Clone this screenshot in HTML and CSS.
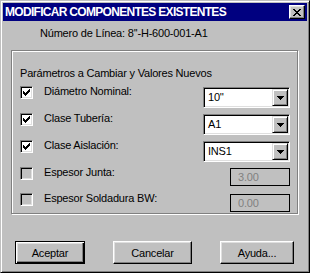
FILE: index.html
```html
<!DOCTYPE html>
<html lang="es">
<head>
  <meta charset="UTF-8">
  <title>Modificar Componentes Existentes</title>
  <link rel="stylesheet" href="styles.css">
</head>
<body>

<div class="window">
  <div class="titlebar">
    <span class="title">MODIFICAR COMPONENTES EXISTENTES</span>
    <span class="close">
      <svg width="8" height="7" viewBox="0 0 8 7" shape-rendering="crispEdges">
        <path d="M0 0h2v1H0zM6 0h2v1H6zM1 1h2v1H1zM5 1h2v1H5zM2 2h4v1H2zM3 3h2v1H3zM2 4h4v1H2zM1 5h2v1H1zM5 5h2v1H5zM0 6h2v1H0zM6 6h2v1H6z" fill="#000"/>
      </svg>
    </span>
  </div>

  <div class="client">
    <p class="line-no">Número de Línea: 8''-H-600-001-A1</p>

    <div class="group">
      <p class="group-caption">Parámetros a Cambiar y Valores Nuevos</p>

      <div class="row">
        <span class="check">
          <svg class="tick" width="7" height="7" viewBox="0 0 7 7" shape-rendering="crispEdges">
            <path d="M0 2h1v3H0zM1 3h1v3H1zM2 4h1v3H2zM3 3h1v3H3zM4 2h1v3H4zM5 1h1v3H5zM6 0h1v3H6z" fill="#000"/>
          </svg>
        </span>
        <span class="label">Diámetro Nominal:</span>
        <div class="combo">
          <span class="combo-value">10''</span>
          <span class="combo-btn">
            <svg width="7" height="4" viewBox="0 0 7 4" shape-rendering="crispEdges"><path d="M0 0h7v1H0zM1 1h5v1H1zM2 2h3v1H2zM3 3h1v1H3z" fill="#000"/></svg>
          </span>
        </div>
      </div>

      <div class="row">
        <span class="check">
          <svg class="tick" width="7" height="7" viewBox="0 0 7 7" shape-rendering="crispEdges">
            <path d="M0 2h1v3H0zM1 3h1v3H1zM2 4h1v3H2zM3 3h1v3H3zM4 2h1v3H4zM5 1h1v3H5zM6 0h1v3H6z" fill="#000"/>
          </svg>
        </span>
        <span class="label">Clase Tubería:</span>
        <div class="combo">
          <span class="combo-value">A1</span>
          <span class="combo-btn">
            <svg width="7" height="4" viewBox="0 0 7 4" shape-rendering="crispEdges"><path d="M0 0h7v1H0zM1 1h5v1H1zM2 2h3v1H2zM3 3h1v1H3z" fill="#000"/></svg>
          </span>
        </div>
      </div>

      <div class="row">
        <span class="check">
          <svg class="tick" width="7" height="7" viewBox="0 0 7 7" shape-rendering="crispEdges">
            <path d="M0 2h1v3H0zM1 3h1v3H1zM2 4h1v3H2zM3 3h1v3H3zM4 2h1v3H4zM5 1h1v3H5zM6 0h1v3H6z" fill="#000"/>
          </svg>
        </span>
        <span class="label">Clase Aislación:</span>
        <div class="combo">
          <span class="combo-value">INS1</span>
          <span class="combo-btn">
            <svg width="7" height="4" viewBox="0 0 7 4" shape-rendering="crispEdges"><path d="M0 0h7v1H0zM1 1h5v1H1zM2 2h3v1H2zM3 3h1v1H3z" fill="#000"/></svg>
          </span>
        </div>
      </div>

      <div class="row row-short">
        <span class="check unchecked"></span>
        <span class="label">Espesor Junta:</span>
        <div class="edit">3.00</div>
      </div>

      <div class="row">
        <span class="check unchecked"></span>
        <span class="label">Espesor Soldadura BW:</span>
        <div class="edit">0.00</div>
      </div>
    </div>

    <div class="buttons">
      <button class="btn btn-default btn-ok">Aceptar</button>
      <button class="btn btn-cancel">Cancelar</button>
      <button class="btn btn-help">Ayuda...</button>
    </div>
  </div>
</div>

</body>
</html>
```

FILE: styles.css
```css
* {
  box-sizing: border-box;
}

body {
  margin: 0;
  font-family: "Liberation Sans", Arial, sans-serif;
  font-size: 11px;
  letter-spacing: -0.2px;
  background: #c0c0c0;
  color: #000;
}

p {
  margin: 0;
}

.window {
  width: 310px;
  height: 273px;
  padding: 2px;
  background: #c0c0c0;
  border: 1px solid;
  border-color: #c0c0c0 #000 #000 #c0c0c0;
  box-shadow: inset 1px 1px #fff, inset -1px -1px #808080;
  display: flex;
  flex-direction: column;
}

.titlebar {
  height: 18px;
  padding: 0 2px;
  background: #000080;
  color: #fff;
  display: flex;
  justify-content: space-between;
  align-items: flex-start;
}

.title {
  font-weight: bold;
  font-size: 12px;
  letter-spacing: -0.7px;
  line-height: 18px;
}

.close {
  width: 16px;
  height: 14px;
  margin-top: 2px;
  background: #c0c0c0;
  border: 1px solid;
  border-color: #fff #000 #000 #fff;
  box-shadow: inset -1px -1px #808080, inset 1px 1px #dfdfdf;
  display: flex;
  align-items: center;
  justify-content: center;
}

.close svg {
  display: block;
}

.line-no {
  margin: 6px 0 0 37px;
  line-height: 13px;
}

.group {
  width: 287px;
  height: 164px;
  margin: 10px 0 0 8px;
  padding: 16px 7px 0 8px;
  border: 1px solid #808080;
  box-shadow: 1px 1px 0 #fff, inset 1px 1px 0 #fff;
}

.group-caption {
  line-height: 13px;
  margin-bottom: 6px;
}

.row {
  height: 27px;
  display: flex;
  align-items: flex-start;
}

.row-short {
  height: 26px;
}

.check {
  width: 13px;
  height: 13px;
  flex: none;
  background: #fff;
  border: 1px solid;
  border-color: #808080 #fff #fff #808080;
  box-shadow: inset 1px 1px #000, inset -1px -1px #dfdfdf;
  display: flex;
  align-items: center;
  justify-content: center;
}

.check.unchecked {
  background: #c0c0c0;
}

.tick {
  display: block;
}

.label {
  margin: -1px 0 0 11px;
  line-height: 13px;
}

.combo {
  width: 87px;
  height: 21px;
  margin: 1px 0 0 auto;
  padding: 1px;
  background: #fff;
  border: 1px solid;
  border-color: #808080 #fff #fff #808080;
  box-shadow: inset 1px 1px #000, inset -1px -1px #dfdfdf;
  display: flex;
}

.combo-value {
  flex: 1;
  padding-left: 3px;
  line-height: 17px;
}

.combo-btn {
  width: 16px;
  height: 17px;
  background: #c0c0c0;
  border: 1px solid;
  border-color: #dfdfdf #000 #000 #dfdfdf;
  box-shadow: inset 1px 1px #fff, inset -1px -1px #808080;
  display: flex;
  align-items: center;
  justify-content: center;
}

.combo-btn svg {
  display: block;
}

.edit {
  width: 60px;
  height: 18px;
  margin: 1px 0 0 auto;
  padding-left: 7px;
  border: 1px solid #000;
  color: #808080;
  line-height: 16px;
}

.buttons {
  display: flex;
  margin: 27px 0 0 12px;
}

.btn {
  height: 23px;
  padding: 0;
  font: inherit;
  letter-spacing: inherit;
  color: #000;
  background: #c0c0c0;
  border: 1px solid;
  border-color: #fff #000 #000 #fff;
  box-shadow: inset -1px -1px #808080, inset 1px 1px #dfdfdf;
}

.btn-default {
  border-color: #000;
  box-shadow: inset 1px 1px #fff, inset -1px -1px #000, inset -2px -2px #808080, inset 2px 2px #dfdfdf;
}

.btn-ok {
  width: 70px;
}

.btn-cancel {
  width: 79px;
  margin-left: 28px;
}

.btn-help {
  width: 74px;
  margin-left: 28px;
}
```
